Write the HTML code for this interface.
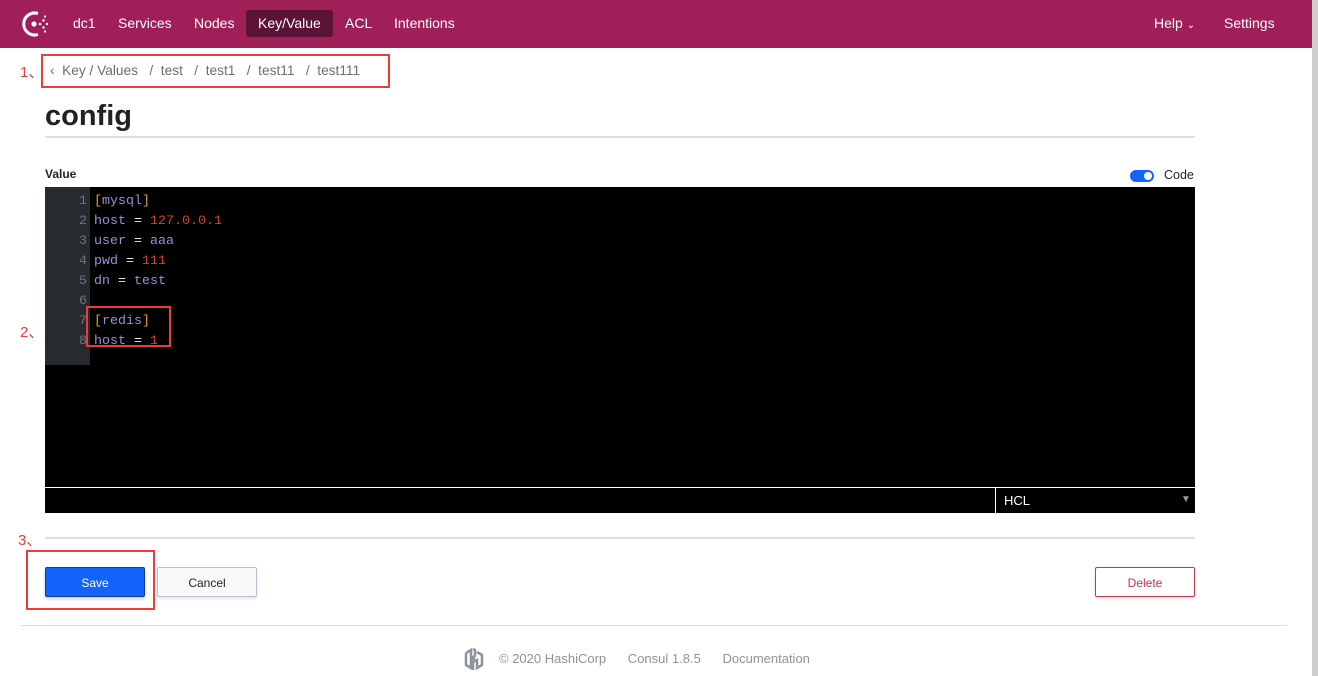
<!DOCTYPE html>
<html><head><meta charset="utf-8"><style>
*{margin:0;padding:0;box-sizing:border-box}
body{width:1318px;height:676px;overflow:hidden;background:#fff;font-family:"Liberation Sans",sans-serif;position:relative;color:#1f2124}
.hdr{position:absolute;left:0;top:0;width:1312px;height:48px;background:#a01f58}
.nav{position:absolute;top:10px;height:27px;line-height:27px;color:#fff;font-size:14px;padding:0 12px;border-radius:3px}
.sb{position:absolute;right:0;top:0;width:6px;height:676px;background:#cfcfcf}
.red{position:absolute;border:2px solid #f03a3a}
.num{position:absolute;color:#f03a3a;font-size:15px}
.code{position:absolute;left:45px;top:187px;width:1150px;height:300px;background:#000}
.gut{position:absolute;left:0;top:0;width:45px;height:178px;background:#272b30}
.ln{position:absolute;font-family:"Liberation Mono",monospace;font-size:13.33px;line-height:20px;white-space:pre}
.g{color:#6b7580;right:3px;text-align:right;left:auto}
.o{color:#e69a45}.p{color:#9a8fd6}.w{color:#e8e8e8}.r{color:#e23a36}
.btn{position:absolute;top:567px;height:30px;border-radius:2px;font-size:12px;text-align:center;line-height:30px}
</style></head><body>
<div class="hdr">
<svg style="position:absolute;left:19px;top:9px" width="32" height="30" viewBox="0 0 32 30"><path d="M19 4.5A11 11 0 1 0 19 25.5" stroke="#fff" stroke-width="3" fill="none"/><circle cx="15" cy="15" r="2.6" fill="#fff"/><g fill="#fff"><circle cx="21" cy="15" r="1.3"/><circle cx="24.5" cy="11.5" r="1.2"/><circle cx="24.5" cy="18.5" r="1.2"/><circle cx="28" cy="15" r="1.2"/><circle cx="26" cy="7.5" r="1.1"/><circle cx="26" cy="22.5" r="1.1"/></g></svg>
<div class="nav" style="left:61px">dc1</div>
<div class="nav" style="left:106px">Services</div>
<div class="nav" style="left:182px">Nodes</div>
<div class="nav" style="left:246px;width:87px;background:#5c1434">Key/Value</div>
<div class="nav" style="left:333px">ACL</div>
<div class="nav" style="left:382px">Intentions</div>
<div class="nav" style="left:1142px">Help <span style="font-size:10px">&#8964;</span></div>
<div class="nav" style="left:1212px">Settings</div>
</div>
<div class="sb"></div>
<div class="num" style="left:20px;top:61px">1、</div>
<div class="red" style="left:41px;top:54px;width:349px;height:34px"></div>
<div style="position:absolute;left:50px;top:63px;font-size:13.7px;color:#6a6d73;white-space:pre">‹  Key / Values   /  test   /  test1   /  test11   /  test111</div>
<div style="position:absolute;left:45px;top:100px;font-size:29px;font-weight:bold;color:#1f2124">config</div>
<div style="position:absolute;left:45px;top:136px;width:1150px;height:2px;background:#dcdde3"></div>
<div style="position:absolute;left:45px;top:167px;font-size:12px;font-weight:bold">Value</div>
<div style="position:absolute;left:1130px;top:170px;width:24px;height:12px;border-radius:6px;background:#1563ff"><div style="position:absolute;right:2px;top:2px;width:8px;height:8px;border-radius:50%;background:#fff"></div></div>
<div style="position:absolute;left:1164px;top:168px;font-size:12.5px">Code</div>
<div class="code">
<div class="gut"></div>
<div class="ln g" style="position:absolute;left:0;width:42px;top:5px">1
2
3
4
5
6
7
8</div>
<div class="ln" style="left:49px;top:5px"><span class="o">[</span><span class="p">mysql</span><span class="o">]</span>
<span class="p">host</span> <span class="w">=</span> <span class="r">127.0.0.1</span>
<span class="p">user</span> <span class="w">=</span> <span class="p">aaa</span>
<span class="p">pwd</span> <span class="w">=</span> <span class="r">111</span>
<span class="p">dn</span> <span class="w">=</span> <span class="p">test</span>

<span class="o">[</span><span class="p">redis</span><span class="o">]</span>
<span class="p">host</span> <span class="w">=</span> <span class="r">1</span></div>
</div>
<div style="position:absolute;left:45px;top:487px;width:1150px;height:1px;background:#fff"></div>
<div style="position:absolute;left:45px;top:488px;width:1150px;height:25px;background:#000"></div>
<div style="position:absolute;left:995px;top:488px;width:1px;height:25px;background:#fff"></div>
<div style="position:absolute;left:1004px;top:493px;color:#fff;font-size:13px">HCL</div>
<div style="position:absolute;left:1181px;top:494px;color:#999;font-size:10px">▼</div>
<div class="num" style="left:20px;top:321px">2、</div>
<div class="red" style="left:86px;top:306px;width:85px;height:41px"></div>
<div class="num" style="left:18px;top:529px">3、</div>
<div style="position:absolute;left:45px;top:537px;width:1150px;height:2px;background:#dcdde3"></div>
<div class="red" style="left:26px;top:550px;width:129px;height:60px"></div>
<div class="btn" style="left:45px;width:100px;background:#1563ff;color:#fff;border:1px solid #0f3aa0;box-shadow:0 2px 3px rgba(0,0,0,.2)">Save</div>
<div class="btn" style="left:157px;width:100px;background:#f7f8fa;border:1px solid #bac1cc;box-shadow:0 2px 3px rgba(0,0,0,.1)">Cancel</div>
<div class="btn" style="left:1095px;width:100px;background:#fff;color:#c73445;border:1px solid #c73445;box-shadow:0 2px 3px rgba(0,0,0,.1)">Delete</div>
<div style="position:absolute;left:21px;top:625px;width:1266px;height:1px;background:#dcdde3"></div>
<svg style="position:absolute;left:463px;top:648px" width="22" height="22" viewBox="0 0 22 22"><path d="M3 5l5-3v8l4-2V2l-2-1 M3 5v12l5 3V12l4-2M14 4l5 3v10l-5 3v-8l-4 2v8" stroke="#8d939c" stroke-width="2.5" fill="none"/></svg>
<div style="position:absolute;left:499px;top:651px;font-size:13px;color:#8d939c;white-space:pre">© 2020 HashiCorp      Consul 1.8.5      Documentation</div>
</body></html>
